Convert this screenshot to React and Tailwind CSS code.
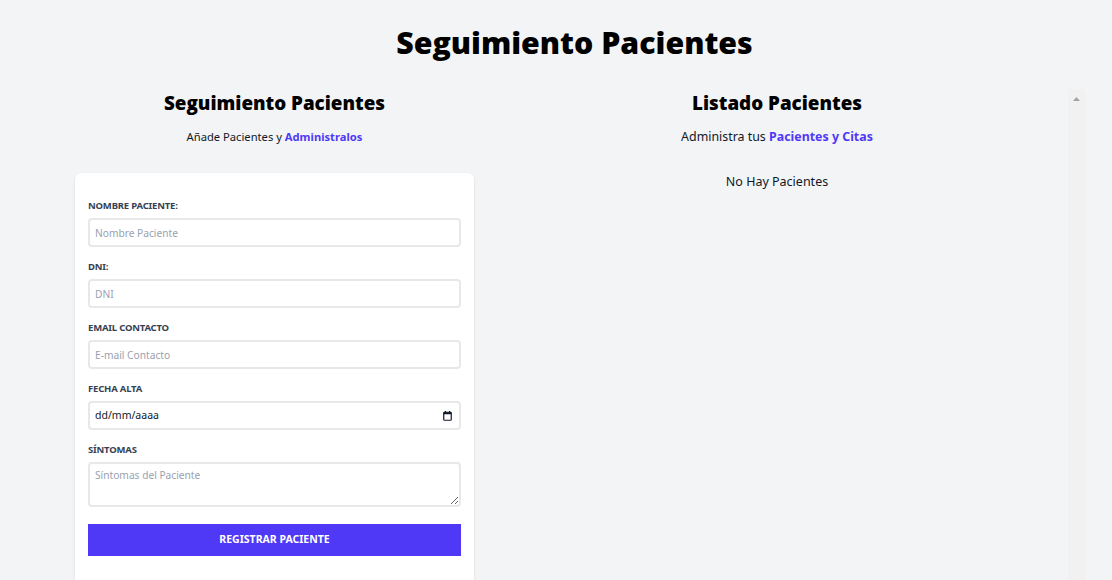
import React from "react";

const body = { fontFamily: '"Noto Sans", "Open Sans", sans-serif' };
const heavy = { fontFamily: '"Open Sans", "Noto Sans", sans-serif' };

function Field({ label, placeholder, children }) {
  return (
    <div className="mb-[13px]">
      <label className="block h-[14px] text-[9.5px] leading-[14px] font-bold uppercase tracking-[-0.02em] text-gray-700">{label}</label>
      <div className="mt-[5px]">
        {children || (
          <input
            placeholder={placeholder}
            className="block w-full h-[29px] border-2 border-[#e8e8e8] rounded-[4px] px-[5px] text-[10.2px] text-gray-800 placeholder:text-gray-400 outline-none bg-white"
            style={body}
          />
        )}
      </div>
    </div>
  );
}

export default function App() {
  return (
    <div className="h-screen overflow-hidden bg-gray-100 text-black" style={body}>
      <div className="ml-[64px] w-[1021px]">
        <h1 className="mt-[23px] text-center text-[30.3px] leading-[40px] font-extrabold" style={heavy}>
          Seguimiento Pacientes
        </h1>
        <div className="mt-[26px] flex items-start">
          <div className="ml-[11px] w-[399px]">
            <h2 className="text-center text-[18.8px] leading-[28px] font-extrabold" style={heavy}>
              Seguimiento Pacientes
            </h2>
            <p className="mt-[12px] text-center text-[11.2px] leading-[16px] text-gray-900">
              Añade Pacientes y <span className="font-bold text-indigo-600">Administralos</span>
            </p>
            <form className="mt-[28px] bg-white rounded-md shadow-sm pt-[26px] px-[13px] pb-[40px]">
              <Field label="Nombre Paciente:" placeholder="Nombre Paciente" />
              <Field label="DNI:" placeholder="DNI" />
              <Field label="Email Contacto" placeholder="E-mail Contacto" />
              <Field label="Fecha Alta">
                <div className="flex items-center justify-between w-full h-[29px] border-2 border-[#e8e8e8] rounded-[4px] pl-[5px] pr-[7px] text-[10.5px] text-gray-900 bg-white">
                  <span>dd/mm/aaaa</span>
                  <svg width="9" height="10" viewBox="0 0 9 10" className="text-gray-900">
                    <rect x="0.75" y="1.25" width="7.5" height="8" rx="0.8" fill="none" stroke="currentColor" strokeWidth="1.2" />
                    <rect x="0.75" y="1.25" width="7.5" height="2" fill="currentColor" />
                    <rect x="1.8" y="0" width="1.2" height="1.5" fill="currentColor" />
                    <rect x="6" y="0" width="1.2" height="1.5" fill="currentColor" />
                  </svg>
                </div>
              </Field>
              <Field label="Síntomas">
                <textarea
                  placeholder="Síntomas del Paciente"
                  className="block w-full h-[45px] border-2 border-[#e8e8e8] rounded-[4px] px-[5px] py-[4px] text-[10.2px] text-gray-800 placeholder:text-gray-400 outline-none bg-white"
                  style={body}
                />
              </Field>
              <button
                type="button"
                className="mt-[17px] block w-full h-[32px] bg-indigo-600 text-white text-[10.5px] font-bold uppercase"
                style={body}
              >
                Registrar Paciente
              </button>
            </form>
          </div>
          <div className="ml-[12px] w-[599px] h-screen flex">
            <div className="flex-1">
              <h2 className="text-center text-[18.8px] leading-[28px] font-extrabold" style={heavy}>
                Listado Pacientes
              </h2>
              <p className="mt-[12px] text-center text-[12.4px] leading-[16px] text-gray-900">
                Administra tus <span className="font-bold text-indigo-600">Pacientes y Citas</span>
              </p>
              <p className="mt-[29px] text-center text-[12.5px] leading-[16px] text-gray-900">No Hay Pacientes</p>
            </div>
            <div className="w-[17px] bg-[#f1f1f1] flex justify-center pt-[8px]">
              <svg width="7" height="4" viewBox="0 0 7 4">
                <polygon points="3.5,0 7,4 0,4" fill="#a3a3a3" />
              </svg>
            </div>
          </div>
        </div>
      </div>
    </div>
  );
}
